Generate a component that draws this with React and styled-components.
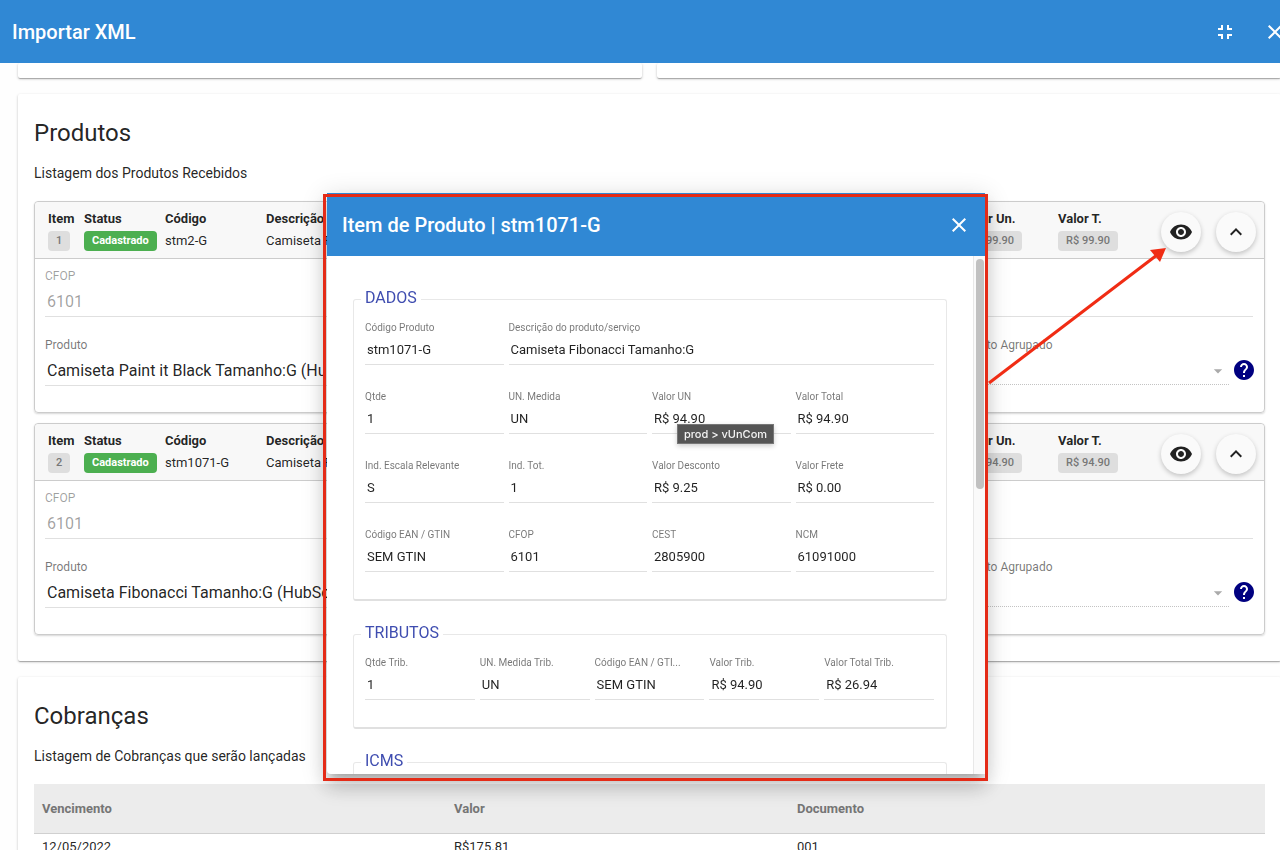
import React from 'react';
import styled, { createGlobalStyle } from 'styled-components';
import {
    MdArrowDropDown,
    MdClose,
    MdFullscreenExit,
    MdHelp,
    MdKeyboardArrowUp,
    MdVisibility,
} from 'react-icons/md';

const GlobalStyle = createGlobalStyle`
    * {
        box-sizing: border-box;
    }

    body {
        margin: 0;
        overflow: hidden;
        color: rgba(0, 0, 0, 0.87);
        background-color: #fefefe;
        font-family: Roboto, 'Liberation Sans', sans-serif;
    }

    input,
    select,
    button {
        font-family: inherit;
    }
`;

const Page = styled.div`
    display: flex;
    flex-direction: column;
    height: 100vh;
    margin-right: -1px;
    overflow: hidden;
`;

const Toolbar = styled.header`
    display: flex;
    flex: none;
    align-items: center;
    justify-content: space-between;
    height: 63px;
    padding: 0 0 0 ${props => props.$indent}px;
    color: #fff;
    background-color: #3088d4;

    h1,
    h2 {
        margin: 0;
        font-size: 20px;
        font-weight: 500;
        line-height: 24px;
    }
`;

const ToolbarActions = styled.div`
    display: flex;
    gap: 10px;
    margin-right: ${props => props.$overhang}px;
`;

const IconButton = styled.button`
    display: flex;
    align-items: center;
    justify-content: center;
    width: 40px;
    height: 40px;
    padding: 0;
    border: none;
    color: inherit;
    background: none;
    cursor: pointer;
`;

const RoundButton = styled(IconButton)`
    border-radius: 50%;
    color: #212121;
    background-color: #fafafa;
    box-shadow: 0 2px 5px 0 rgba(0, 0, 0, 0.22);
`;

const Content = styled.main`
    flex: 1;
    padding-left: 18px;
    overflow: hidden;
`;

const Card = styled.section`
    margin-bottom: 16px;
    padding: 23px 16px 26px;
    border-radius: 2px;
    background-color: #fff;
    box-shadow: 0 1px 3px 0 rgba(0, 0, 0, 0.2), 0 1px 1px 0 rgba(0, 0, 0, 0.14), 0 2px 1px -1px rgba(0, 0, 0, 0.12);
`;

const TopCards = styled.div`
    display: grid;
    grid-template-columns: 1fr 1fr;
    gap: 15px;
`;

const TopCard = styled(Card)`
    height: 15px;
    padding: 0;
`;

const CardTitle = styled.h2`
    margin: 0 0 14px;
    font-size: 24px;
    font-weight: 400;
    line-height: 32px;
`;

const CardText = styled.p`
    margin: 0 0 18px;
    font-size: 14px;
    line-height: 20px;
`;

const ProductList = styled.div`
    display: flex;
    flex-direction: column;
    gap: 10px;
`;

const ProductRow = styled.article`
    border: 1px solid #ccc;
    border-radius: 4px;
    box-shadow: 0 1px 2px rgba(0, 0, 0, 0.16);
`;

const ProductHead = styled.div`
    display: grid;
    grid-template-columns: 36px 81px 101px 1fr 96px 103px 55px 40px;
    align-items: center;
    height: 57px;
    padding: 4px 8px 0 13px;
    border-bottom: 1px solid #ccc;
    border-radius: 4px 4px 0 0;
    background-color: #f8f8f8;
`;

const HeadCell = styled.div`
    display: flex;
    flex-direction: column;
    align-items: flex-start;
    align-self: start;
    gap: 2px;
    padding-top: 3px;
    font-size: 13px;
    line-height: 20px;
    white-space: nowrap;

    strong {
        font-weight: 700;
    }
`;

const Badge = styled.span`
    padding: 0 8px;
    border-radius: 4px;
    font-size: 11px;
    font-weight: ${props => (props.$green ? 700 : 500)};
    color: ${props => (props.$green ? '#fff' : '#777')};
    background-color: ${props => (props.$green ? '#4caf50' : '#dedede')};
`;

const ProductBody = styled.div`
    display: grid;
    gap: 20px;
    padding: 9px 11px 26px 10px;
`;

const ProductLine = styled.div`
    display: grid;
    grid-template-columns: 1fr 274px 24px;
    column-gap: 3px;
    margin-right: -3px;
`;

const Field = styled.div`
    position: relative;
    min-width: 0;

    label {
        display: block;
        font-size: 12px;
        line-height: 16px;
        color: ${props => (props.$disabled ? 'rgba(0, 0, 0, 0.38)' : 'rgba(0, 0, 0, 0.54)')};
    }

    input,
    select {
        display: block;
        width: 100%;
        height: 33px;
        padding: 2px 2px 0;
        border: none;
        border-bottom: 1px solid #e0e0e0;
        border-radius: 0;
        outline: none;
        font-size: 16px;
        color: ${props => (props.$disabled ? 'rgba(0, 0, 0, 0.38)' : 'rgba(0, 0, 0, 0.87)')};
        background: none;
    }

    select {
        height: 32px;
        border-bottom: 1px dotted #aaa;
        appearance: none;
    }

    svg {
        position: absolute;
        right: 1px;
        bottom: 5px;
        color: #aaa;
        pointer-events: none;
    }
`;

const HelpButton = styled(IconButton)`
    width: 24px;
    height: 24px;
    align-self: end;
    margin-bottom: 4px;
    color: #000080;
`;

const Table = styled.table`
    width: 100%;
    border-collapse: collapse;
    table-layout: fixed;
    font-size: 13px;
    text-align: left;

    th {
        height: 49px;
        padding: 0 8px;
        border-bottom: 1px solid #d0d0d0;
        font-weight: 700;
        color: #757575;
        background-color: #ececec;
    }

    td {
        height: 26px;
        padding: 0 8px;
    }

    th:nth-child(1) {
        width: 412px;
    }

    th:nth-child(2) {
        width: 343px;
    }
`;

const Overlay = styled.div`
    position: fixed;
    inset: 0;
    display: flex;
    justify-content: center;
    padding: 193px 0 76px 32px;
`;

const Modal = styled.div`
    position: relative;
    display: flex;
    flex-direction: column;
    width: 658px;
    border-radius: 4px;
    background-color: #fff;
    box-shadow: 0 7px 8px -4px rgba(0, 0, 0, 0.2), 0 13px 19px 2px rgba(0, 0, 0, 0.14),
        0 5px 24px 4px rgba(0, 0, 0, 0.12);
`;

const ModalContent = styled.div`
    display: flex;
    flex: 1;
    min-height: 0;
    overflow: hidden;
`;

const Groups = styled.div`
    display: flex;
    flex: 1;
    flex-direction: column;
    gap: 23px;
    padding: 33px 26px 0;
`;

const ScrollTrack = styled.div`
    width: 12px;
    padding: 3px 1px 0 2px;
    border-left: 1px solid #e8e8e8;
    background-color: #fafafa;
`;

const ScrollThumb = styled.div`
    height: 230px;
    border-radius: 4px;
    background-color: #c1c1c1;
`;

const Group = styled.fieldset`
    flex: none;
    min-width: 0;
    margin: 0;
    padding: 12px 12px 27px 11px;
    border: 1px solid #e8e8e8;
    border-bottom: 2px solid #e0e0e0;
    border-radius: 3px;

    legend {
        height: 20px;
        margin-left: -4px;
        padding: 0 4px;
        font-size: 16px;
        line-height: 18px;
        color: #3f4db0;
    }
`;

const GroupGrid = styled.div`
    display: grid;
    grid-template-columns: repeat(${props => props.$columns}, 1fr);
    gap: 25px 5px;
`;

const SmallField = styled(Field)`
    grid-column: span ${props => props.$span || 1};

    label {
        font-size: 10px;
        line-height: 14px;
        white-space: nowrap;
    }

    input {
        height: 30px;
        padding: 0 2px;
        font-size: 13px;
    }
`;

const Tooltip = styled.div`
    position: absolute;
    top: 34px;
    left: 25px;
    z-index: 1;
    padding: 0 6px;
    border: 1px solid #777;
    font-family: Inter, sans-serif;
    font-size: 11px;
    font-weight: 500;
    line-height: 18px;
    white-space: nowrap;
    color: #f4f4f4;
    background-color: #555;
    box-shadow: 0 2px 5px rgba(0, 0, 0, 0.2);
`;

const Highlight = styled.div`
    position: absolute;
    inset: 1px -3px -7px -4px;
    border: 3px solid #e42b17;
    pointer-events: none;
`;

const Arrow = styled.svg`
    position: absolute;
    top: 52px;
    left: 660px;
    pointer-events: none;
`;

const products = [
    { item: 1, code: 'stm2-G', name: 'Camiseta Paint it Black Tamanho:G', value: 'R$ 99.90' },
    { item: 2, code: 'stm1071-G', name: 'Camiseta Fibonacci Tamanho:G', value: 'R$ 94.90' },
];

const groups = [
    {
        title: 'DADOS',
        columns: 4,
        fields: [
            { label: 'Código Produto', value: 'stm1071-G' },
            { label: 'Descrição do produto/serviço', value: 'Camiseta Fibonacci Tamanho:G', span: 3 },
            { label: 'Qtde', value: '1' },
            { label: 'UN. Medida', value: 'UN' },
            { label: 'Valor UN', value: 'R$ 94.90', tooltip: 'prod > vUnCom' },
            { label: 'Valor Total', value: 'R$ 94.90' },
            { label: 'Ind. Escala Relevante', value: 'S' },
            { label: 'Ind. Tot.', value: '1' },
            { label: 'Valor Desconto', value: 'R$ 9.25' },
            { label: 'Valor Frete', value: 'R$ 0.00' },
            { label: 'Código EAN / GTIN', value: 'SEM GTIN' },
            { label: 'CFOP', value: '6101' },
            { label: 'CEST', value: '2805900' },
            { label: 'NCM', value: '61091000' },
        ],
    },
    {
        title: 'TRIBUTOS',
        columns: 5,
        fields: [
            { label: 'Qtde Trib.', value: '1' },
            { label: 'UN. Medida Trib.', value: 'UN' },
            { label: 'Código EAN / GTI...', value: 'SEM GTIN' },
            { label: 'Valor Trib.', value: 'R$ 94.90' },
            { label: 'Valor Total Trib.', value: 'R$ 26.94' },
        ],
    },
    { title: 'ICMS', columns: 4, fields: [] },
];

const Product = ({ item, code, name, value }) => (
    <ProductRow>
        <ProductHead>
            <HeadCell>
                <strong>Item</strong>
                <Badge>{item}</Badge>
            </HeadCell>
            <HeadCell>
                <strong>Status</strong>
                <Badge $green>Cadastrado</Badge>
            </HeadCell>
            <HeadCell>
                <strong>Código</strong>
                <span>{code}</span>
            </HeadCell>
            <HeadCell>
                <strong>Descrição</strong>
                <span>{name}</span>
            </HeadCell>
            <HeadCell>
                <strong>Valor Un.</strong>
                <Badge>{value}</Badge>
            </HeadCell>
            <HeadCell>
                <strong>Valor T.</strong>
                <Badge>{value}</Badge>
            </HeadCell>
            <RoundButton aria-label="Visualizar">
                <MdVisibility size={24} />
            </RoundButton>
            <RoundButton aria-label="Recolher">
                <MdKeyboardArrowUp size={24} />
            </RoundButton>
        </ProductHead>
        <ProductBody>
            <Field $disabled>
                <label htmlFor={`cfop-${item}`}>CFOP</label>
                <input id={`cfop-${item}`} defaultValue="6101" disabled />
            </Field>
            <ProductLine>
                <Field>
                    <label htmlFor={`product-${item}`}>Produto</label>
                    <input id={`product-${item}`} defaultValue={`${name} (HubSoft)`} />
                </Field>
                <Field>
                    <label htmlFor={`group-${item}`}>Produto Agrupado</label>
                    <select id={`group-${item}`} disabled />
                    <MdArrowDropDown size={20} />
                </Field>
                <HelpButton aria-label="Ajuda">
                    <MdHelp size={24} />
                </HelpButton>
            </ProductLine>
        </ProductBody>
    </ProductRow>
);

export default function App() {
    return (
        <>
            <GlobalStyle />
            <Page>
                <Toolbar $indent={12}>
                    <h1>Importar XML</h1>
                    <ToolbarActions $overhang={-14}>
                        <IconButton aria-label="Sair da tela cheia">
                            <MdFullscreenExit size={24} />
                        </IconButton>
                        <IconButton aria-label="Fechar">
                            <MdClose size={24} />
                        </IconButton>
                    </ToolbarActions>
                </Toolbar>
                <Content>
                    <TopCards>
                        <TopCard />
                        <TopCard />
                    </TopCards>
                    <Card>
                        <CardTitle>Produtos</CardTitle>
                        <CardText>Listagem dos Produtos Recebidos</CardText>
                        <ProductList>
                            {products.map(product => (
                                <Product key={product.item} {...product} />
                            ))}
                        </ProductList>
                    </Card>
                    <Card>
                        <CardTitle>Cobranças</CardTitle>
                        <CardText>Listagem de Cobranças que serão lançadas</CardText>
                        <Table>
                            <thead>
                                <tr>
                                    <th>Vencimento</th>
                                    <th>Valor</th>
                                    <th>Documento</th>
                                </tr>
                            </thead>
                            <tbody>
                                <tr>
                                    <td>12/05/2022</td>
                                    <td>R$175.81</td>
                                    <td>001</td>
                                </tr>
                            </tbody>
                        </Table>
                    </Card>
                </Content>
            </Page>
            <Overlay>
                <Modal role="dialog" aria-labelledby="modal-title">
                    <Toolbar as="div" $indent={15}>
                        <h2 id="modal-title">Item de Produto | stm1071-G</h2>
                        <ToolbarActions $overhang={6}>
                            <IconButton aria-label="Fechar">
                                <MdClose size={24} />
                            </IconButton>
                        </ToolbarActions>
                    </Toolbar>
                    <ModalContent>
                        <Groups>
                            {groups.map(group => (
                                <Group key={group.title}>
                                    <legend>{group.title}</legend>
                                    <GroupGrid $columns={group.columns}>
                                        {group.fields.map((field, index) => {
                                            const id = `${group.title}-${index}`;
                                            return (
                                                <SmallField key={id} $span={field.span}>
                                                    <label htmlFor={id}>{field.label}</label>
                                                    <input id={id} defaultValue={field.value} readOnly />
                                                    {field.tooltip && <Tooltip role="tooltip">{field.tooltip}</Tooltip>}
                                                </SmallField>
                                            );
                                        })}
                                    </GroupGrid>
                                </Group>
                            ))}
                        </Groups>
                        <ScrollTrack>
                            <ScrollThumb />
                        </ScrollTrack>
                    </ModalContent>
                    <Highlight />
                    <Arrow width="182" height="142" viewBox="0 0 182 142">
                        <path d="M2 138 L170 10" stroke="#f02c14" strokeWidth="3" />
                        <path d="M179 3 L163 5 L173 17 Z" fill="#f02c14" />
                    </Arrow>
                </Modal>
            </Overlay>
        </>
    );
}
